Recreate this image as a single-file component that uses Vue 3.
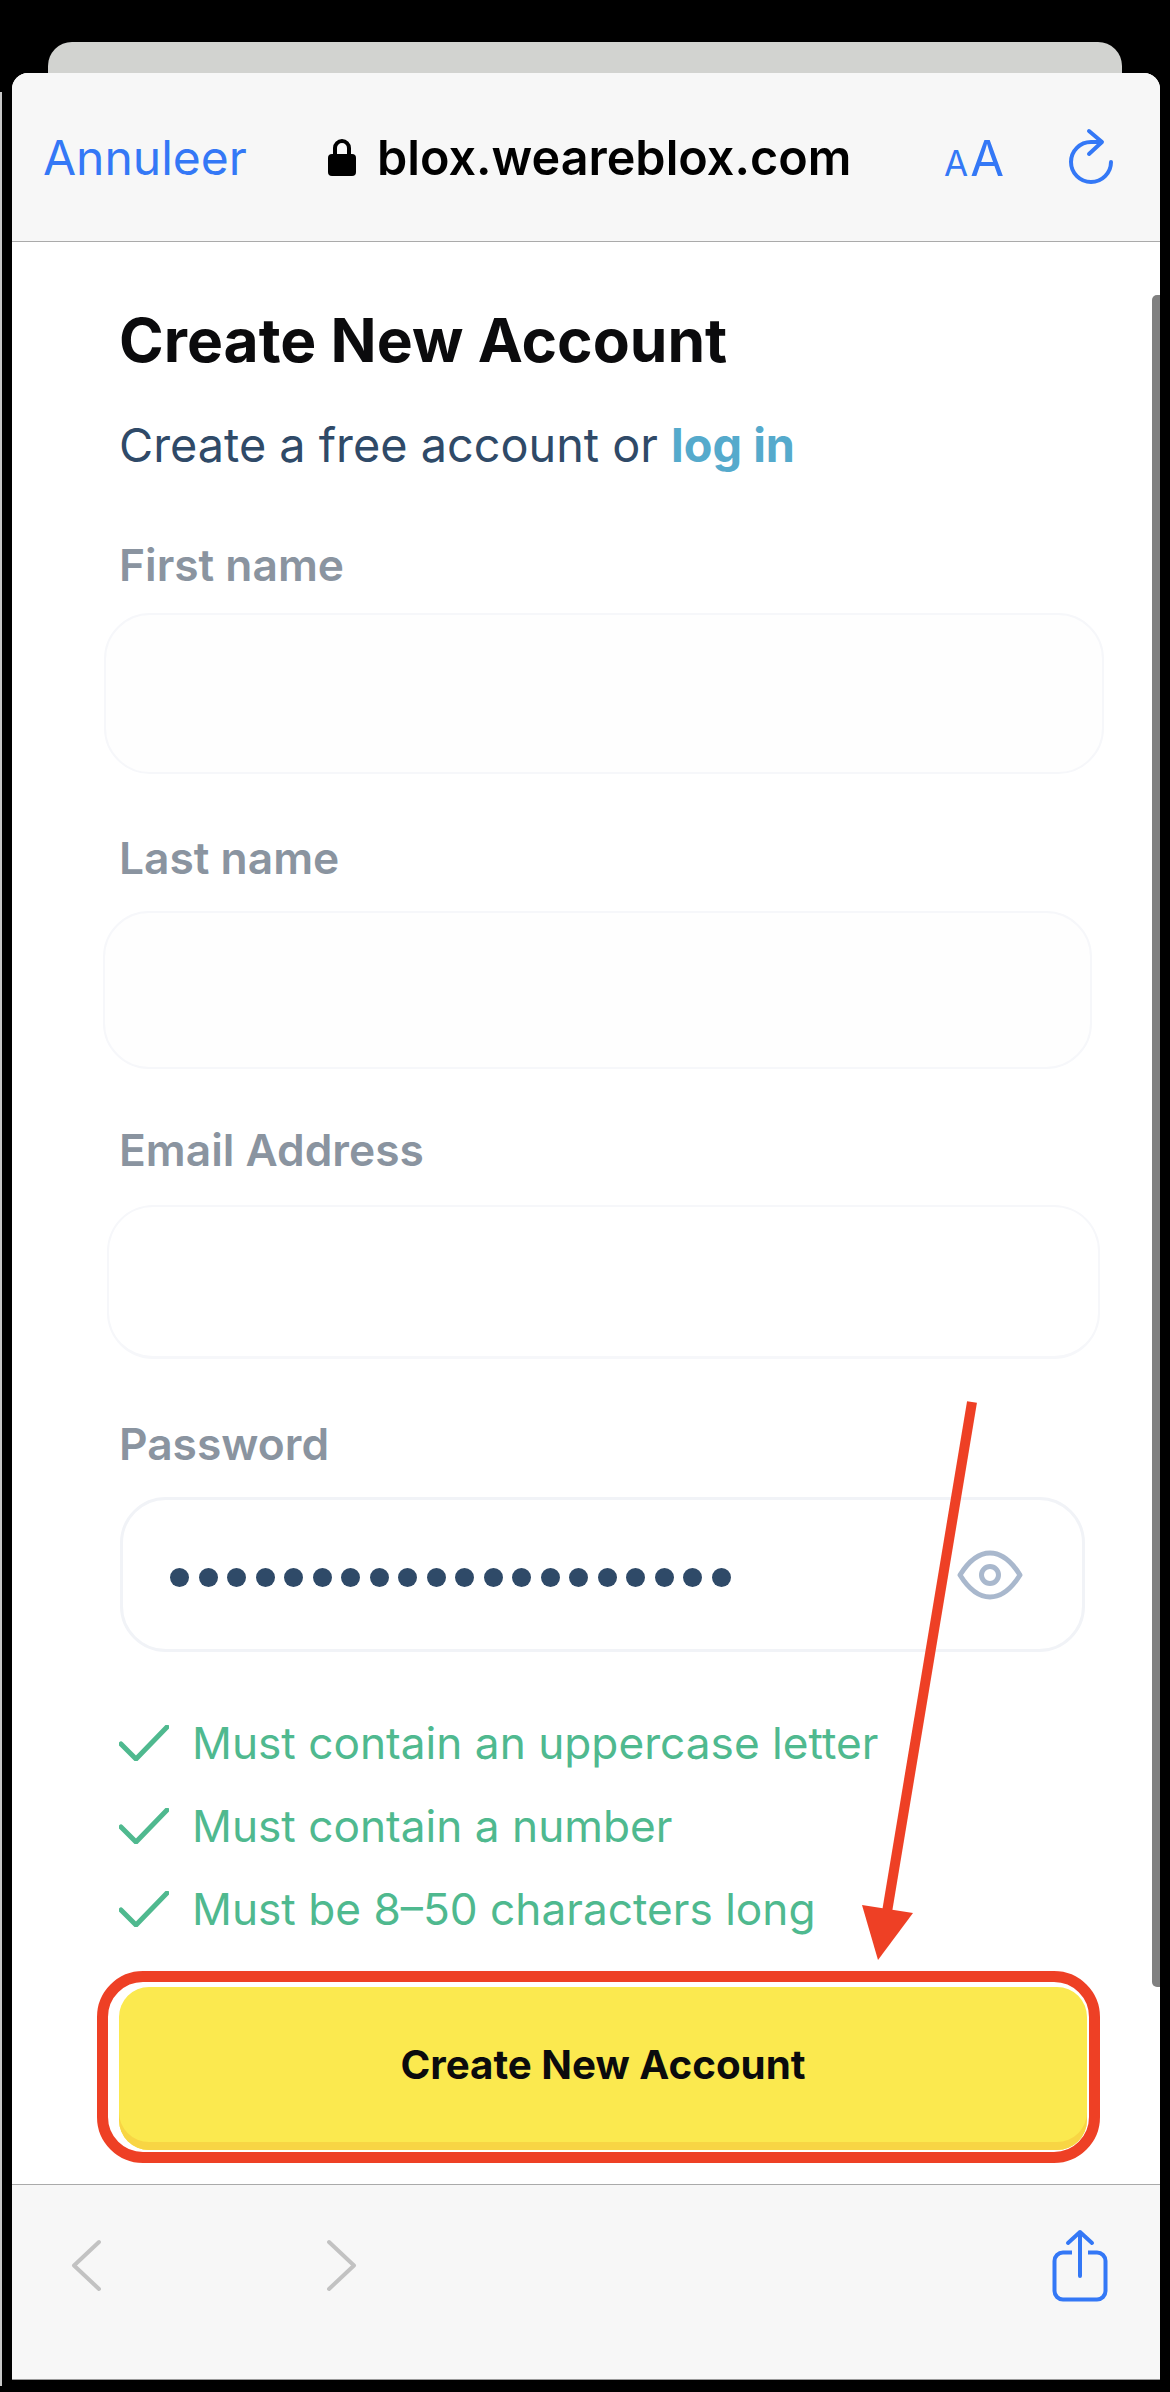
<script setup>
const dots = Array.from({ length: 20 }, (_, i) => i)
const rules = ['Must contain an uppercase letter', 'Must contain a number', 'Must be 8–50 characters long']
</script>

<template>
  <div class="page">
    <div class="sliver"></div>
    <div class="behind"></div>
    <div class="sheet">
      <header class="top">
        <span class="cancel">Annuleer</span>
        <div class="url">
          <svg class="lock" width="28" height="38" viewBox="0 0 28 38">
            <path d="M7 18V10a7 7 0 0 1 14 0v8" fill="none" stroke="#000" stroke-width="4" />
            <rect x="0" y="16" width="28" height="22" rx="4" fill="#000" />
          </svg>
          <span>blox.weareblox.com</span>
        </div>
        <div class="tools">
          <span class="aa"><span class="small">A</span><span class="big">A</span></span>
          <svg width="60" height="65" viewBox="0 0 60 65" fill="none" stroke="#3478f6" stroke-width="4" stroke-linecap="round" stroke-linejoin="round">
            <path d="M50 37A20 20 0 1 1 30 17H40" />
            <path d="M28 6L41 17L28 29" />
          </svg>
        </div>
      </header>

      <main class="body">
        <h1 class="title">Create New Account</h1>
        <p class="sub">Create a free account or <b>log in</b></p>

        <label class="label first-label">First name</label>
        <div class="box box-first"></div>
        <label class="label last-label">Last name</label>
        <div class="box box-last"></div>
        <label class="label email-label">Email Address</label>
        <div class="box box-email"></div>
        <label class="label pass-label">Password</label>
        <div class="box box-pass">
          <div class="dots"><span v-for="d in dots" :key="d" class="dot"></span></div>
          <svg width="66" height="50" viewBox="0 0 66 50" fill="none" stroke="#a9b8cd" stroke-width="5">
            <path d="M3 25C13 9 23 3 33 3s20 6 30 22C53 41 43 47 33 47S13 41 3 25Z" stroke-linejoin="round" />
            <circle cx="33" cy="25" r="8.5" />
          </svg>
        </div>

        <ul class="rules">
          <li v-for="r in rules" :key="r" class="rule">
            <svg width="50" height="36" viewBox="0 0 50 36" fill="none" stroke="#4fb98f" stroke-width="5" stroke-linecap="round" stroke-linejoin="round">
              <path d="M2 19L17 34L48 2" />
            </svg>
            <span>{{ r }}</span>
          </li>
        </ul>

        <div class="cta-wrap">
          <button class="cta">Create New Account</button>
          <div class="ring"></div>
        </div>
      </main>

      <footer class="bottom">
        <svg width="30" height="53" viewBox="0 0 30 53" fill="none" stroke="#c2c2c2" stroke-width="4" stroke-linecap="round" stroke-linejoin="round">
          <path d="M28 3L3 26.5L28 50" />
        </svg>
        <svg class="next" width="30" height="53" viewBox="0 0 30 53" fill="none" stroke="#c2c2c2" stroke-width="4" stroke-linecap="round" stroke-linejoin="round">
          <path d="M2 3L27 26.5L2 50" />
        </svg>
        <svg class="share" width="60" height="76" viewBox="0 0 60 76" fill="none" stroke="#3478f6" stroke-width="4" stroke-linecap="round" stroke-linejoin="round">
          <path d="M22 24.5H13a8.5 8.5 0 0 0-8.500 8.500v30a8.500 8.500 0 0 0 8.500 8.500h34a8.500 8.500 0 0 0 8.500-8.500v-30a8.500 8.500 0 0 0-8.500-8.500H38" stroke-linecap="butt" />
          <path d="M30 48V4M18 15L30 4L42 15" />
        </svg>
      </footer>

      <div class="scrollbar"></div>
    </div>

    <svg class="arrow" width="1170" height="2392" viewBox="0 0 1170 2392">
      <path d="M972 1402L887 1912" stroke="#ee4025" stroke-width="10" fill="none" />
      <path d="M862 1905L913 1913L878 1960Z" fill="#ee4025" />
    </svg>
  </div>
</template>

<style>
html, body { margin: 0; background: #000; }
</style>

<style scoped>
.page {
  position: relative;
  width: 1170px;
  height: 2392px;
  overflow: hidden;
  background: #000;
  font-family: Inter, "Liberation Sans", sans-serif;
  padding-top: 42px;
  box-sizing: border-box;
}
.sliver {
  position: absolute;
  left: 0;
  top: 92px;
  bottom: 6px;
  width: 2px;
  background: #c8c8c8;
}
.behind {
  height: 31px;
  margin: 0 48px;
  background: #d2d3d0;
  border-radius: 24px 24px 0 0;
}
.sheet {
  position: relative;
  width: 1148px;
  height: 2307px;
  margin-left: 12px;
  background: #fff;
  border-radius: 16px 16px 0 0;
  display: flex;
  flex-direction: column;
  overflow: hidden;
}
.top {
  flex: none;
  height: 168px;
  background: #f7f7f7;
  border-bottom: 1px solid #aaa;
  display: grid;
  grid-template-columns: 316px 616px 1fr;
  align-items: center;
}
.cancel {
  padding-left: 31px;
  font-size: 48px;
  color: #3478f6;
}
.url {
  display: flex;
  align-items: center;
  gap: 21px;
  font-size: 48.500px;
  font-weight: 600;
  color: #000;
}
.tools {
  display: flex;
  align-items: center;
  gap: 57px;
}
.aa {
  display: flex;
  align-items: baseline;
  color: #3478f6;
  gap: 2px;
  margin-top: 8px;
}
.small { font-size: 35px; line-height: 50px; }
.big { font-size: 49px; line-height: 50px; }
.body {
  flex: 1;
  min-height: 0;
}
.title {
  margin: 68px 0 0 107px;
  font-size: 60.500px;
  line-height: 60px;
  font-weight: 700;
  color: #0b0b0d;
}
.sub {
  margin: 50px 0 0 107px;
  font-size: 46.800px;
  line-height: 50px;
  color: #2f4a68;
}
.sub b {
  color: #55aacc;
  font-weight: 700;
}
.label {
  display: block;
  margin-left: 107px;
  font-size: 44.300px;
  line-height: 44px;
  font-weight: 600;
  color: #8a94a0;
}
.first-label { margin-top: 73px; }
.last-label { margin-top: 62px; }
.email-label { margin-top: 59px; }
.pass-label { margin-top: 63px; }
.box {
  box-sizing: border-box;
  border: 2px solid #f6f7fa;
  border-radius: 46px;
  background: #fefefe;
}
.box-first { margin: 26px 0 0 92px; width: 1000px; height: 161px; }
.box-last { margin: 31px 0 0 91px; width: 989px; height: 158px; }
.box-email { margin: 33px 0 0 95px; width: 993px; height: 154px; background: #fff; border-bottom-width: 3px; }
.box-pass {
  margin: 31px 0 0 108px;
  width: 965px;
  height: 155px;
  background: #fff;
  border-width: 3px;
  border-color: #f1f3f7;
  display: flex;
  align-items: center;
  justify-content: space-between;
  padding: 0 59px 0 47px;
}
.dots {
  display: flex;
  gap: 9.5px;
  margin-top: 6px;
}
.dot {
  width: 19px;
  height: 19px;
  border-radius: 50%;
  background: #2f4a68;
}
.rules {
  list-style: none;
  margin: 49px 0 0 107px;
  padding: 0;
}
.rule {
  display: flex;
  align-items: center;
  gap: 23px;
  height: 83px;
  font-size: 44.200px;
  color: #4fb98f;
}
.cta-wrap {
  position: relative;
  margin: 37px 0 0 107px;
  width: 968px;
  height: 163px;
}
.cta {
  display: block;
  width: 100%;
  height: 100%;
  border: 0;
  padding: 0 0 8px;
  border-radius: 30px;
  background: #fbe94f;
  box-shadow: inset 0 -8px 0 #f8d544;
  font-family: inherit;
  font-size: 40.300px;
  font-weight: 700;
  color: #0b0b0d;
}
.ring {
  position: absolute;
  inset: -16px -13px -13px -22px;
  border: 11px solid #ee4025;
  border-radius: 46px;
  pointer-events: none;
}
.bottom {
  flex: none;
  box-sizing: border-box;
  height: 196px;
  background: #f7f7f7;
  border-top: 1px solid #aaa;
  border-bottom: 1px solid #999;
  display: flex;
  align-items: flex-start;
  padding: 54px 50px 0 59px;
}
.next { margin-left: 226px; }
.share { margin: -11px 0 0 auto; }
.scrollbar {
  position: absolute;
  right: 0;
  top: 222px;
  width: 8px;
  height: 1692px;
  background: #808080;
  border-radius: 5px 0 0 5px;
}
.arrow {
  position: absolute;
  left: 0;
  top: 0;
  pointer-events: none;
}
</style>
